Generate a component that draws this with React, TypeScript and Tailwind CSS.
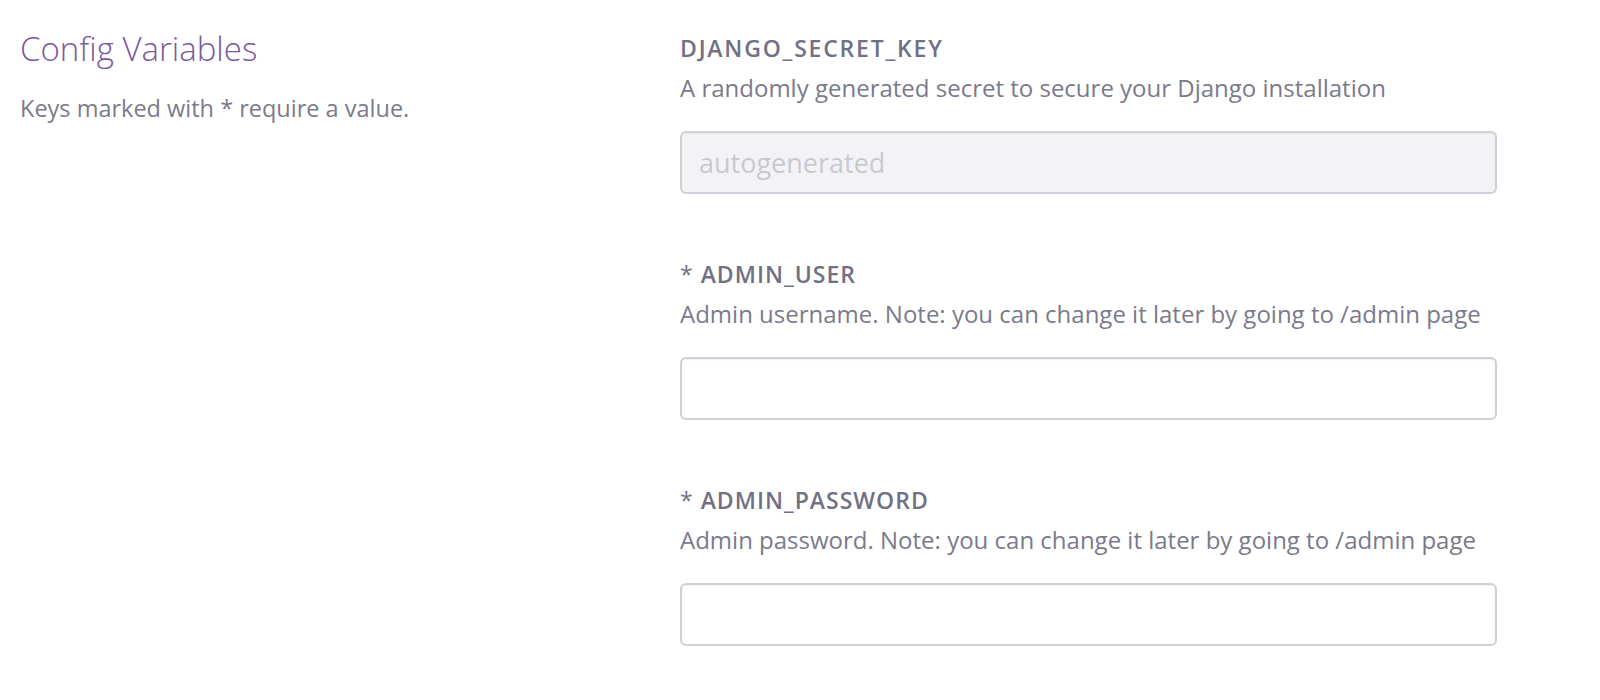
const fields = [
  {
    key: 'DJANGO_SECRET_KEY',
    required: false,
    description: 'A randomly generated secret to secure your Django installation',
    placeholder: 'autogenerated',
    disabled: true,
    tracking: 'tracking-[1.8px]',
  },
  {
    key: 'ADMIN_USER',
    required: true,
    description: 'Admin username. Note: you can change it later by going to /admin page',
    placeholder: '',
    disabled: false,
    tracking: 'tracking-[1px]',
  },
  {
    key: 'ADMIN_PASSWORD',
    required: true,
    description: 'Admin password. Note: you can change it later by going to /admin page',
    placeholder: '',
    disabled: false,
    tracking: 'tracking-[1px]',
  },
];

export default function App() {
  return (
    <div className="min-h-screen bg-white font-['Open_Sans','Liberation_Sans',sans-serif]">
      <div className="flex px-[20px] pt-[31px]">
        {/* left column */}
        <div className="w-[660px] shrink-0">
          <h2 className="text-[33px] leading-[36px] font-light text-[#79589f]">Config Variables</h2>
          <p className="mt-[26px] text-[23.5px] leading-[30px] text-[#7b7a8c]">
            Keys marked with * require a value.
          </p>
        </div>

        {/* right column */}
        <div className="w-[817px] flex flex-col gap-[63px]">
          {fields.map((f) => (
            <div key={f.key}>
              <label className={'block text-[23px] leading-[34px] font-semibold text-[#717085] ' + f.tracking}>
                {f.required && <span className="font-normal">* </span>}
                {f.key}
              </label>
              <p className="mt-[8px] text-[24px] leading-[30px] text-[#7b7a8c]">{f.description}</p>
              <input
                type="text"
                disabled={f.disabled}
                placeholder={f.placeholder}
                className={
                  'mt-[28px] block h-[63px] w-full rounded-[6px] border-2 border-[#d0d0d8] px-[17px] text-[27px] shadow-[inset_0_1px_2px_rgba(0,0,0,0.06)] outline-none placeholder:text-[#c9c9d1] ' +
                  (f.disabled ? 'bg-[#f3f3f6]' : 'bg-white')
                }
              />
            </div>
          ))}
        </div>
      </div>
    </div>
  );
}
